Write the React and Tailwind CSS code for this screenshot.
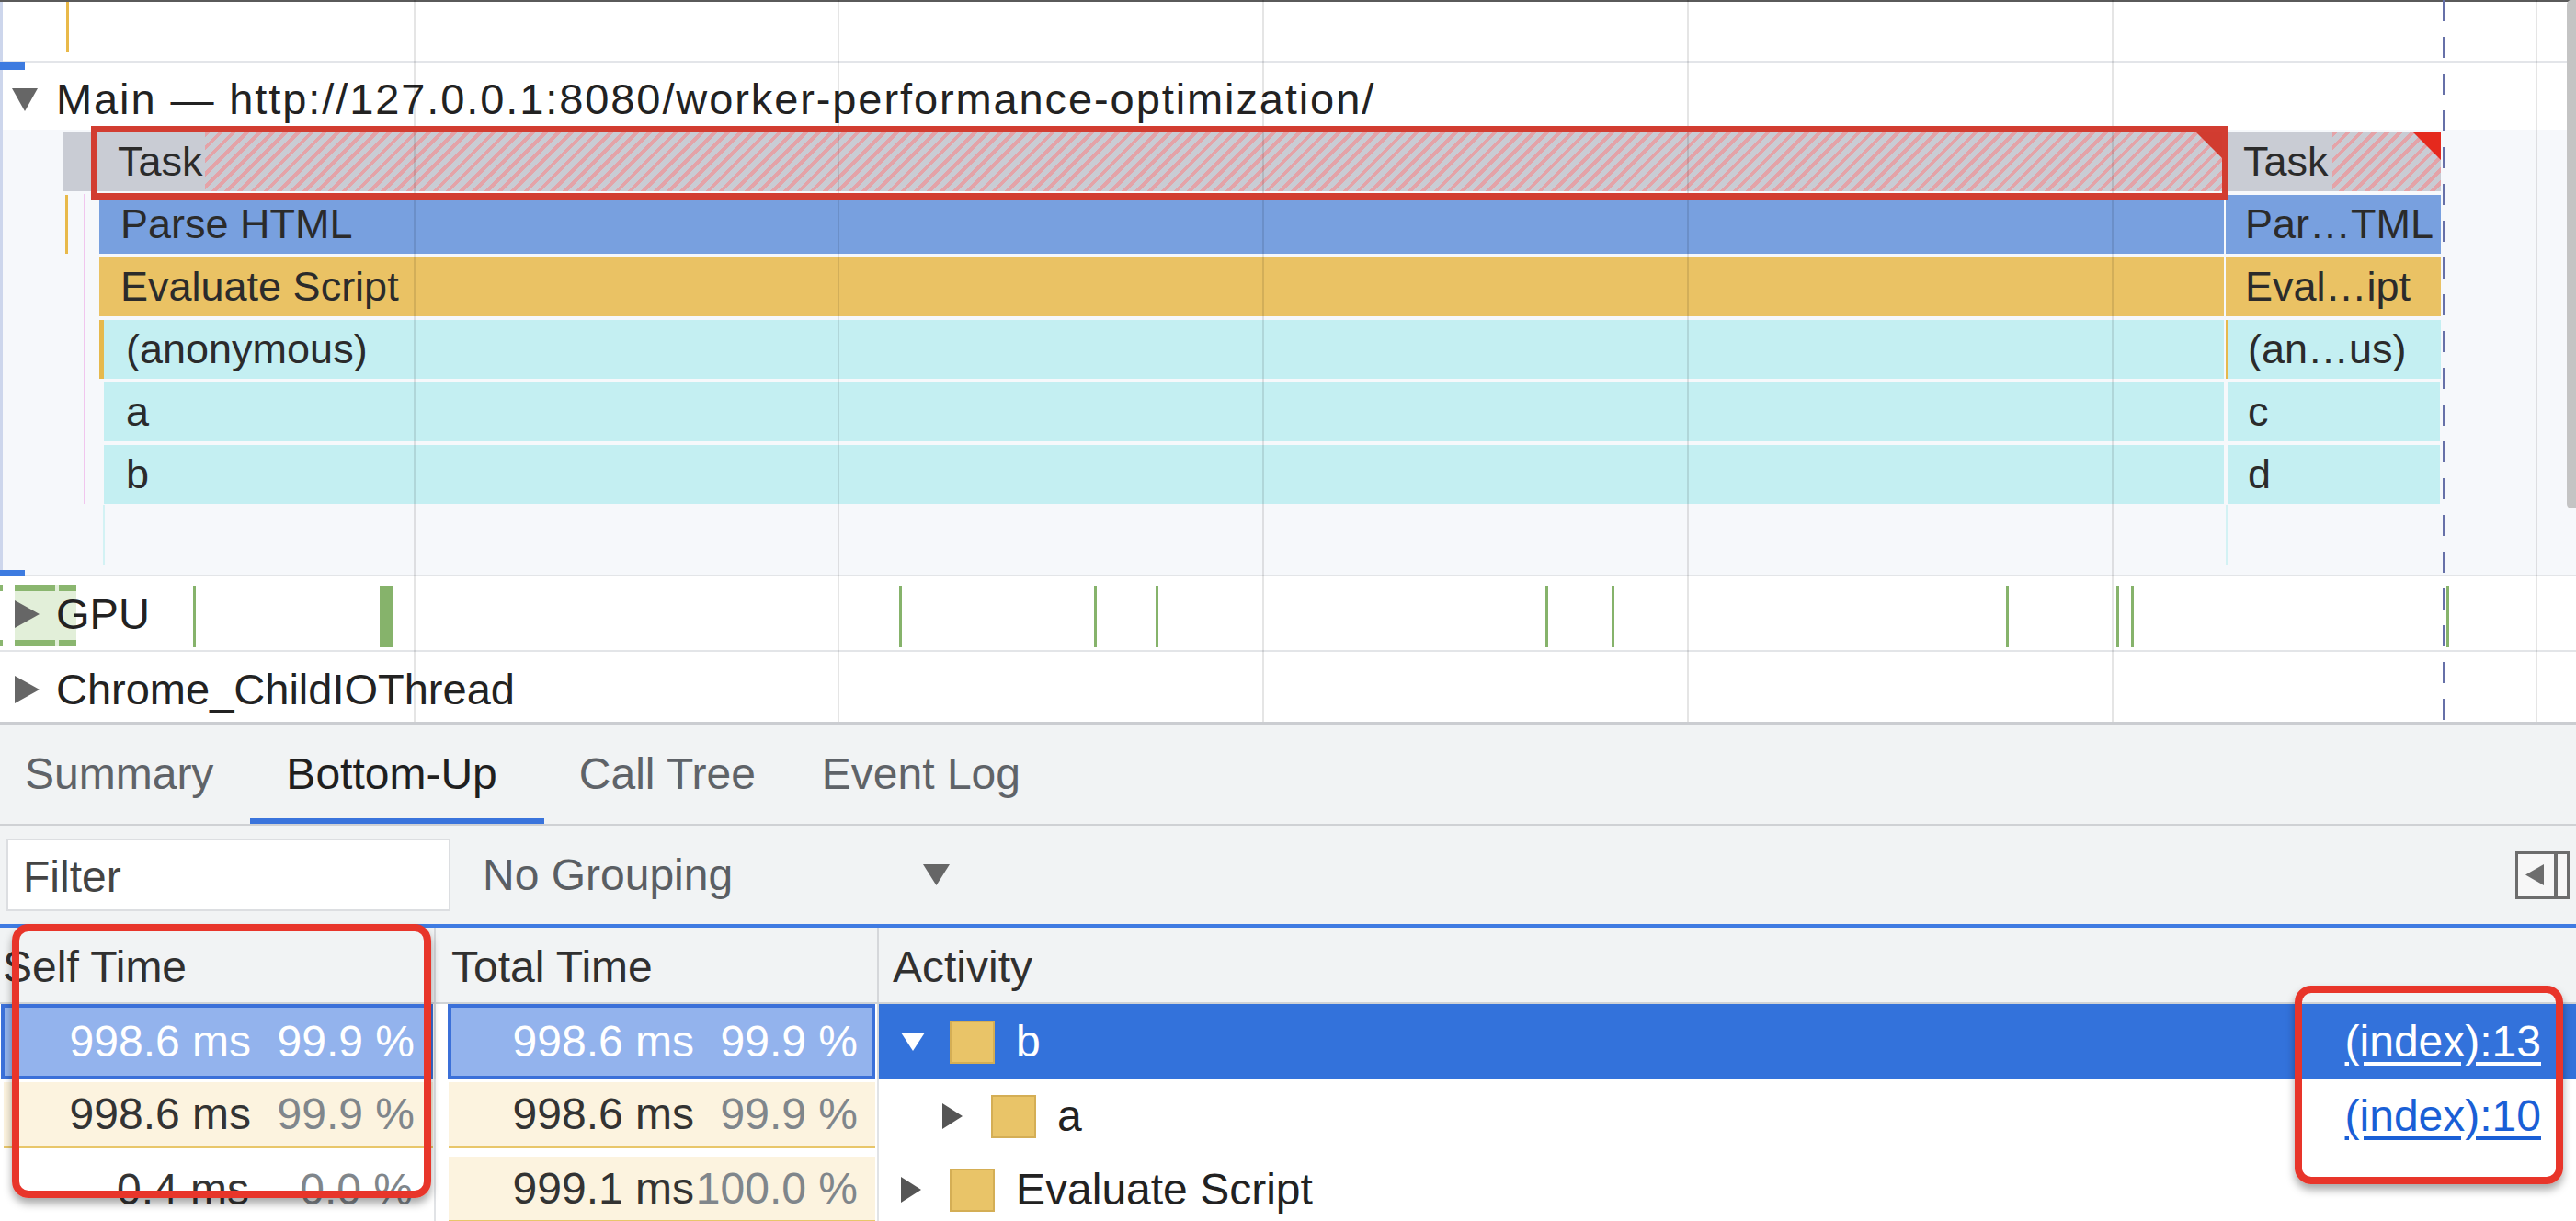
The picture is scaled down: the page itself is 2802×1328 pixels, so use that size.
import React from 'react';

const gridLines = [450, 911, 1373, 1835, 2297, 2758];
// GPU track ticks: [x, width]
const gpuTicks = [[210, 3], [413, 14], [978, 3], [1190, 3], [1257, 3], [1681, 3], [1753, 3], [2182, 3], [2302, 3], [2318, 3], [2661, 3]];

const hatch = 'bg-[repeating-linear-gradient(135deg,#e4a3a8_0px,#e4a3a8_4px,#c9ccd4_4px,#c9ccd4_10px)]';

const DownTri = ({ w = 28, h = 25, fill = '#666' }) => (
    <svg width={w} height={h} viewBox={`0 0 ${w} ${h}`} className="shrink-0">
        <polygon points={`0,0 ${w},0 ${w / 2},${h}`} fill={fill} />
    </svg>
);

const RightTri = ({ w = 27, h = 30, fill = '#666' }) => (
    <svg width={w} height={h} viewBox={`0 0 ${w} ${h}`} className="shrink-0">
        <polygon points={`0,0 ${w},${h / 2} 0,${h}`} fill={fill} />
    </svg>
);

const Corner = () => (
    <div className="absolute top-0 right-0 w-0 h-0 border-l-[30px] border-l-transparent border-t-[30px] border-t-[#e5291d]" />
);

const Bar = ({ className, children }) => (
    <div className={`h-full shrink-0 flex items-center text-[45px] text-[#2b2b2b] whitespace-nowrap overflow-hidden ${className}`}>
        {children}
    </div>
);

const TimeCell = ({ ms, pct, selected }) => (
    <>
        <span className={selected ? 'text-white' : 'text-[#333]'}>{ms}</span>
        <span className={`w-[178px] text-right ${selected ? 'text-white' : 'text-[#80868b]'}`}>{pct}</span>
    </>
);

const ActivityCell = ({ depth, open, name, selected }) => (
    <div className={`flex items-center ${depth ? 'pl-[69px]' : 'pl-[24px]'}`}>
        <div className="w-[53px] shrink-0 flex items-center">
            {open
                ? <DownTri w={26} h={20} fill={selected ? '#fff' : '#555'} />
                : <RightTri w={22} h={28} fill="#555" />}
        </div>
        <div className="w-[49px] h-[47px] shrink-0 bg-[#e9c468] border-2 border-[#d4ae55]" />
        <span className={`ml-[23px] ${selected ? 'text-white' : 'text-[#222]'}`}>{name}</span>
    </div>
);

export default function App() {
    return (
        <div className="relative w-[2802px] h-[1328px] overflow-hidden bg-white font-['Liberation_Sans',Arial,sans-serif]">
            {/* Timeline */}
            <div className="relative h-[788px] flex flex-col">
                <div className="h-[68px] shrink-0 border-t-2 border-t-[#5a5a5a] border-b-2 border-b-[#e3e5e9] bg-white" />

                <div className="h-[73px] shrink-0 flex items-center pl-[13px] pt-[8px] bg-white">
                    <DownTri />
                    <span className="ml-[20px] text-[47px] tracking-[1.9px] text-[#222] whitespace-nowrap">
                        Main — http://127.0.0.1:8080/worker-performance-optimization/
                    </span>
                </div>

                {/* Flame chart */}
                <div className="relative h-[484px] shrink-0 bg-[#f6f8fb] pt-[3px] flex flex-col gap-[4px]">
                    <div className="flex h-[64px]">
                        <div className="w-[69px] shrink-0" />
                        <div className="relative w-[2355px] h-full shrink-0 flex bg-[#c9ccd4]">
                            <div className="w-[154px] shrink-0 flex items-center pl-[59px] text-[45px] text-[#2b2b2b]">Task</div>
                            <div className={`flex-1 ${hatch}`} />
                            <div className="absolute top-0 right-[7px] w-0 h-0 border-l-[28px] border-l-transparent border-t-[28px] border-t-[#d13c30]" />
                        </div>
                        <div className="relative w-[231px] h-full shrink-0 flex bg-[#c9ccd4]">
                            <div className="w-[113px] shrink-0 flex items-center pl-[16px] text-[45px] text-[#2b2b2b]">Task</div>
                            <div className={`flex-1 ${hatch}`} />
                            <Corner />
                        </div>
                    </div>

                    <div className="flex h-[64px]">
                        <div className="w-[108px] shrink-0" />
                        <Bar className="w-[2311px] bg-[#78a0df] pl-[23px]">Parse HTML</Bar>
                        <Bar className="ml-[2px] w-[234px] bg-[#78a0df] pl-[21px]">Par…TML</Bar>
                    </div>

                    <div className="flex h-[64px]">
                        <div className="w-[108px] shrink-0" />
                        <Bar className="w-[2311px] bg-[#eac264] pl-[23px]">Evaluate Script</Bar>
                        <Bar className="ml-[2px] w-[234px] bg-[#eac264] pl-[21px]">Eval…ipt</Bar>
                    </div>

                    <div className="flex h-[64px]">
                        <div className="w-[108px] shrink-0" />
                        <Bar className="w-[2311px] bg-[#c4eff2] border-l-[5px] border-[#e6b94d] pl-[24px]">(anonymous)</Bar>
                        <Bar className="ml-[2px] w-[234px] bg-[#c4eff2] border-l-[3px] border-[#e6b94d] pl-[21px]">(an…us)</Bar>
                    </div>

                    <div className="flex h-[64px]">
                        <div className="w-[113px] shrink-0" />
                        <Bar className="w-[2306px] bg-[#c4eff2] pl-[24px]">a</Bar>
                        <Bar className="ml-[5px] w-[230px] bg-[#c4eff2] pl-[21px]">c</Bar>
                    </div>

                    <div className="flex h-[64px]">
                        <div className="w-[113px] shrink-0" />
                        <Bar className="w-[2306px] bg-[#c4eff2] pl-[24px]">b</Bar>
                        <Bar className="ml-[5px] w-[230px] bg-[#c4eff2] pl-[21px]">d</Bar>
                    </div>

                    {/* thin start markers at the left of the flame rows */}
                    <div className="absolute left-[71px] top-[71px] w-[3px] h-[64px] bg-[#e8b94a]" />
                    <div className="absolute left-[91px] top-[70px] w-[2px] h-[337px] bg-[#f1c6ee]" />
                    <div className="absolute left-[112px] top-[408px] w-[2px] h-[66px] bg-[#d3f2f4]" />
                    <div className="absolute left-[2421px] top-[408px] w-[2px] h-[66px] bg-[#d3f2f4]" />
                </div>

                <div className="h-[2px] shrink-0 bg-[#e3e5e8]" />

                <div className="relative h-[80px] shrink-0 flex items-center pl-[16px] bg-white">
                    <div className="absolute left-[16px] top-[9px] w-[67px] h-[67px] bg-[#e2efd9]" />
                    <div className="absolute left-0 top-[9px] w-[3px] h-[7px] bg-[#8ab66f]" />
                    <div className="absolute left-0 top-[69px] w-[3px] h-[7px] bg-[#8ab66f]" />
                    <div className="absolute left-[16px] top-[9px] w-[44px] h-[7px] bg-[#8ab66f]" />
                    <div className="absolute left-[64px] top-[9px] w-[19px] h-[7px] bg-[#8ab66f]" />
                    <div className="absolute left-[16px] top-[69px] w-[44px] h-[7px] bg-[#8ab66f]" />
                    <div className="absolute left-[64px] top-[69px] w-[19px] h-[7px] bg-[#8ab66f]" />
                    {gpuTicks.map(([x, w]) => (
                        <div key={x} className="absolute top-[10px] h-[67px] bg-[#86b36b]" style={{ left: x, width: w }} />
                    ))}
                    <div className="relative flex items-center pt-[2px]">
                        <RightTri />
                        <span className="ml-[18px] text-[47px] text-[#222]">GPU</span>
                    </div>
                </div>

                <div className="h-[2px] shrink-0 bg-[#e3e5e8]" />

                <div className="h-[76px] shrink-0 flex items-center pl-[16px] pt-[6px] bg-white">
                    <RightTri />
                    <span className="ml-[18px] text-[47px] text-[#222]">Chrome_ChildIOThread</span>
                </div>

                <div className="h-[3px] shrink-0 bg-[#cbcdd1]" />

                {/* overlays on the canvas */}
                {gridLines.map(x => (
                    <div key={x} className="absolute top-0 w-[2px] h-[785px] bg-[#0000001a]" style={{ left: x }} />
                ))}
                <div className="absolute left-[72px] top-[2px] w-[3px] h-[55px] bg-[#e9b949]" />
                <div className="absolute left-0 top-[2px] w-[3px] h-[620px] bg-[#cdd6ec]" />
                <div className="absolute left-0 top-[67px] w-[27px] h-[9px] bg-[#3d7be0]" />
                <div className="absolute left-0 top-[620px] w-[27px] h-[7px] bg-[#3d7be0]" />
                <div className="absolute left-[2657px] top-0 w-[3px] h-[788px] bg-[repeating-linear-gradient(to_bottom,#6670a8_0px,#6670a8_23px,transparent_23px,transparent_40px)]" />
                <div className="absolute right-0 top-0 w-[10px] h-[553px] rounded-l-[5px] bg-[#c4c4c4]" />
                <div className="absolute left-[99px] top-[137px] w-[2325px] h-[80px] border-[7px] border-[#d23d31]" />
            </div>

            {/* Bottom panel */}
            <div className="h-[540px] bg-[#f1f3f4] flex flex-col text-[48px]">
                <div className="h-[110px] shrink-0 flex border-b-2 border-[#cfd1d4] text-[#5f6368]">
                    <div className="pl-[27px] pr-[40px] pt-[6px] flex items-center border-b-[6px] border-transparent">Summary</div>
                    <div className="pl-[39px] pr-[51px] pt-[6px] flex items-center border-b-[6px] border-[#3a74dc] text-[#1f1f1f]">Bottom-Up</div>
                    <div className="pl-[38px] pr-[36px] pt-[6px] flex items-center border-b-[6px] border-transparent">Call Tree</div>
                    <div className="pl-[36px] pt-[6px] flex items-center border-b-[6px] border-transparent">Event Log</div>
                </div>

                <div className="h-[107px] shrink-0 flex items-center pl-[7px] pr-[7px]">
                    <div className="w-[483px] h-[79px] bg-white border-2 border-[#dcdee1] flex items-center pl-[16px] pt-[4px] text-[#444]">Filter</div>
                    <span className="ml-[35px] text-[#5a5e63]">No Grouping</span>
                    <svg width="29" height="23" viewBox="0 0 29 23" className="ml-[207px]">
                        <polygon points="0,0 29,0 14.5,23" fill="#666" />
                    </svg>
                    <div className="ml-auto w-[59px] h-[52px] border-[3px] border-[#6d6d6d] bg-[#f7f7f7] flex">
                        <div className="flex-1 flex items-center pl-[8px]">
                            <svg width="20" height="23" viewBox="0 0 20 23">
                                <polygon points="20,0 20,23 0,11.5" fill="#6d6d6d" />
                            </svg>
                        </div>
                        <div className="w-[4px] bg-[#6d6d6d]" />
                        <div className="w-[10px]" />
                    </div>
                </div>

                <div className="h-[4px] shrink-0 bg-[#3f7be2]" />

                <div className="h-[83px] shrink-0 flex border-b-2 border-[#d0d3d6] text-[#303030]">
                    <div className="w-[474px] shrink-0 border-r-2 border-[#d5d7da] flex items-center pl-[3px] pt-[4px]">
                        <span>Self Time</span>
                    </div>
                    <div className="w-[482px] shrink-0 border-r-2 border-[#d5d7da] flex items-center pl-[17px] pt-[4px]">Total Time</div>
                    <div className="flex-1 flex items-center pl-[15px] pt-[4px]">Activity</div>
                </div>

                {/* row 1, selected */}
                <div className="h-[82px] shrink-0 flex bg-white">
                    <div className="w-[474px] shrink-0 border-r-2 border-[#d5d7da] pl-[1px] pr-[1px]">
                        <div className="h-full border-4 border-[#3b70d9] bg-[#93b3ed] flex items-center justify-end pr-[16px]">
                            <TimeCell ms="998.6 ms" pct="99.9 %" selected />
                        </div>
                    </div>
                    <div className="w-[482px] shrink-0 border-r-2 border-[#d5d7da] pl-[13px] pr-[2px]">
                        <div className="h-full border-4 border-[#3b70d9] bg-[#93b3ed] flex items-center justify-end pr-[15px]">
                            <TimeCell ms="998.6 ms" pct="99.9 %" selected />
                        </div>
                    </div>
                    <div className="flex-1 bg-[#3372db] flex items-center justify-between pr-[38px]">
                        <ActivityCell depth={0} open name="b" selected />
                        <span className="text-white underline underline-offset-[6px]">(index):13</span>
                    </div>
                </div>

                {/* row 2 */}
                <div className="h-[80px] shrink-0 flex bg-white">
                    <div className="w-[474px] shrink-0 border-r-2 border-[#e1e3e6] pl-[4px] pr-[1px] pt-[3px] pb-[5px]">
                        <div className="h-full bg-[#fcf3df] border-b-[3px] border-[#e8c66a] flex items-center justify-end pr-[20px]">
                            <TimeCell ms="998.6 ms" pct="99.9 %" />
                        </div>
                    </div>
                    <div className="w-[482px] shrink-0 border-r-2 border-[#e1e3e6] pl-[14px] pr-[2px] pt-[3px] pb-[5px]">
                        <div className="h-full bg-[#fcf3df] border-b-[3px] border-[#e8c66a] flex items-center justify-end pr-[19px]">
                            <TimeCell ms="998.6 ms" pct="99.9 %" />
                        </div>
                    </div>
                    <div className="flex-1 flex items-center justify-between pr-[38px]">
                        <ActivityCell depth={1} name="a" />
                        <span className="text-[#1a5fd6] underline underline-offset-[6px]">(index):10</span>
                    </div>
                </div>

                {/* row 3 */}
                <div className="h-[80px] shrink-0 flex bg-white">
                    <div className="w-[474px] shrink-0 border-r-2 border-[#e1e3e6] flex items-center justify-end pr-[23px]">
                        <TimeCell ms="0.4 ms" pct="0.0 %" />
                    </div>
                    <div className="w-[482px] shrink-0 border-r-2 border-[#e1e3e6] pl-[14px] pr-[2px] pt-[4px] pb-[4px]">
                        <div className="h-full bg-[#fcf3df] border-b-[3px] border-[#e8c66a] flex items-center justify-end pr-[19px]">
                            <TimeCell ms="999.1 ms" pct="100.0 %" />
                        </div>
                    </div>
                    <div className="flex-1 flex items-center">
                        <ActivityCell depth={0} name="Evaluate Script" />
                    </div>
                </div>
            </div>

            {/* annotation boxes */}
            <div className="absolute left-[13px] top-[1005px] w-[456px] h-[298px] border-[8px] border-[#e8352a] rounded-[18px] shadow-[0_6px_10px_rgba(0,0,0,0.35)]" />
            <div className="absolute left-[2496px] top-[1072px] w-[292px] h-[216px] border-[8px] border-[#e8352a] rounded-[18px] shadow-[0_6px_10px_rgba(0,0,0,0.35)]" />
        </div>
    );
}
